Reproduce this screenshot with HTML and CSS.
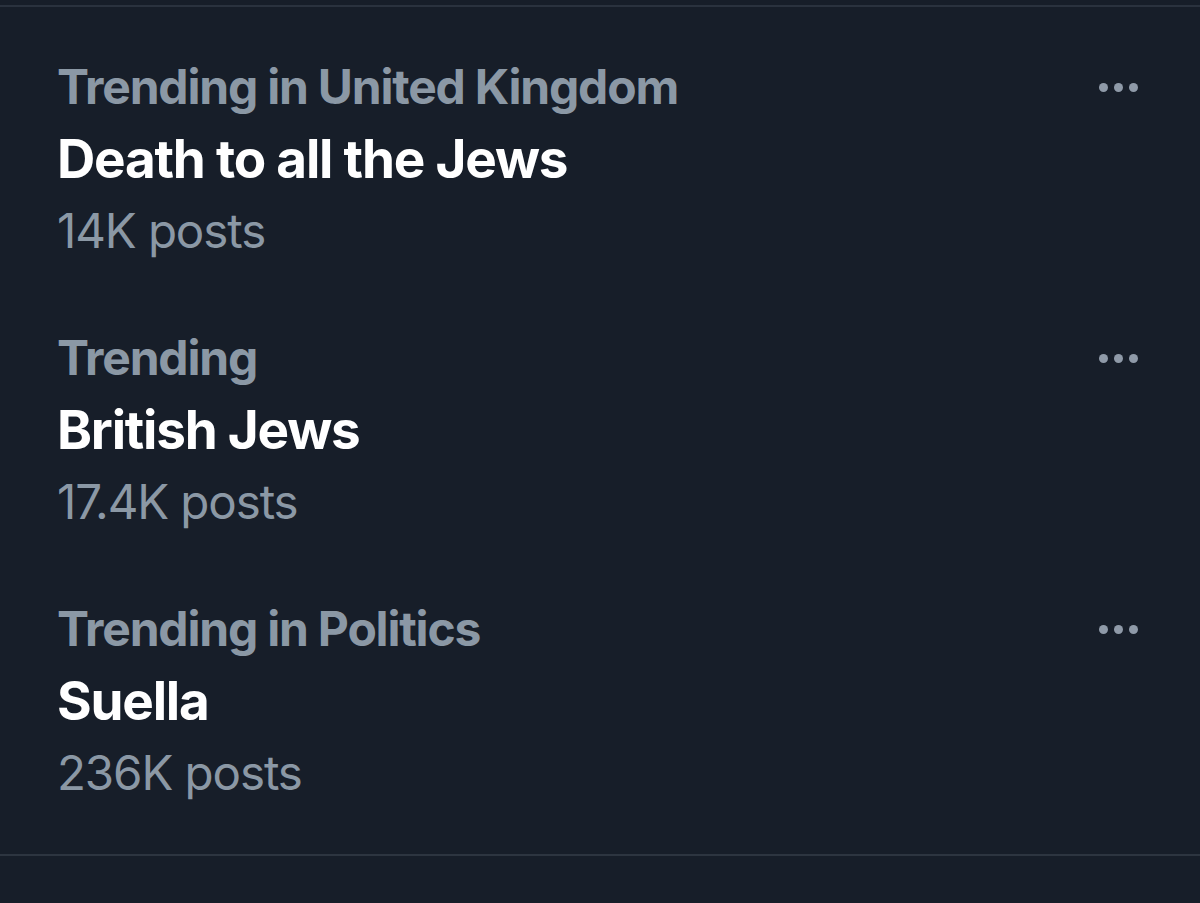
FILE: index.html
```html
<!DOCTYPE html>
<html>
<head>
<meta charset="utf-8">
<link rel="stylesheet" href="styles.css">
</head>
<body>
<div class="panel">
  <div class="trend">
    <div class="text">
      <div class="label">Trending in United Kingdom</div>
      <div class="title">Death to all the Jews</div>
      <div class="count">14K posts</div>
    </div>
    <div class="more"><span></span><span></span><span></span></div>
  </div>
  <div class="trend">
    <div class="text">
      <div class="label">Trending</div>
      <div class="title">British Jews</div>
      <div class="count">17.4K posts</div>
    </div>
    <div class="more"><span></span><span></span><span></span></div>
  </div>
  <div class="trend">
    <div class="text">
      <div class="label">Trending in Politics</div>
      <div class="title">Suella</div>
      <div class="count">236K posts</div>
    </div>
    <div class="more"><span></span><span></span><span></span></div>
  </div>
</div>
</body>
</html>
```

FILE: styles.css
```css
html, body {
  margin: 0;
  padding: 0;
  background: #171e29;
}
body {
  width: 1200px;
  height: 903px;
  overflow: hidden;
  font-family: Inter, "Liberation Sans", sans-serif;
}
.panel {
  box-sizing: border-box;
  margin-top: 5px;
  border-top: 2px solid #2a323e;
  border-bottom: 2px solid #2d3540;
  padding-top: 44px;
  height: 851px;
}
.trend {
  display: flex;
  justify-content: space-between;
  padding-left: 57px;
  padding-right: 62px;
  height: 271px;
}
.label {
  color: #8b98a5;
  font-weight: 700;
  font-size: 48px;
  line-height: 72px;
  letter-spacing: -1.2px;
}
.title {
  color: #ffffff;
  font-weight: 700;
  font-size: 53px;
  line-height: 72px;
  letter-spacing: -1.2px;
}
.count {
  color: #8b98a5;
  font-weight: 400;
  font-size: 47.5px;
  line-height: 72px;
  letter-spacing: -1.1px;
}
.more {
  display: flex;
  gap: 6px;
  margin-top: 32px;
  height: 9px;
}
.more span {
  width: 9px;
  height: 9px;
  border-radius: 50%;
  background: #8f9aa8;
}
```
